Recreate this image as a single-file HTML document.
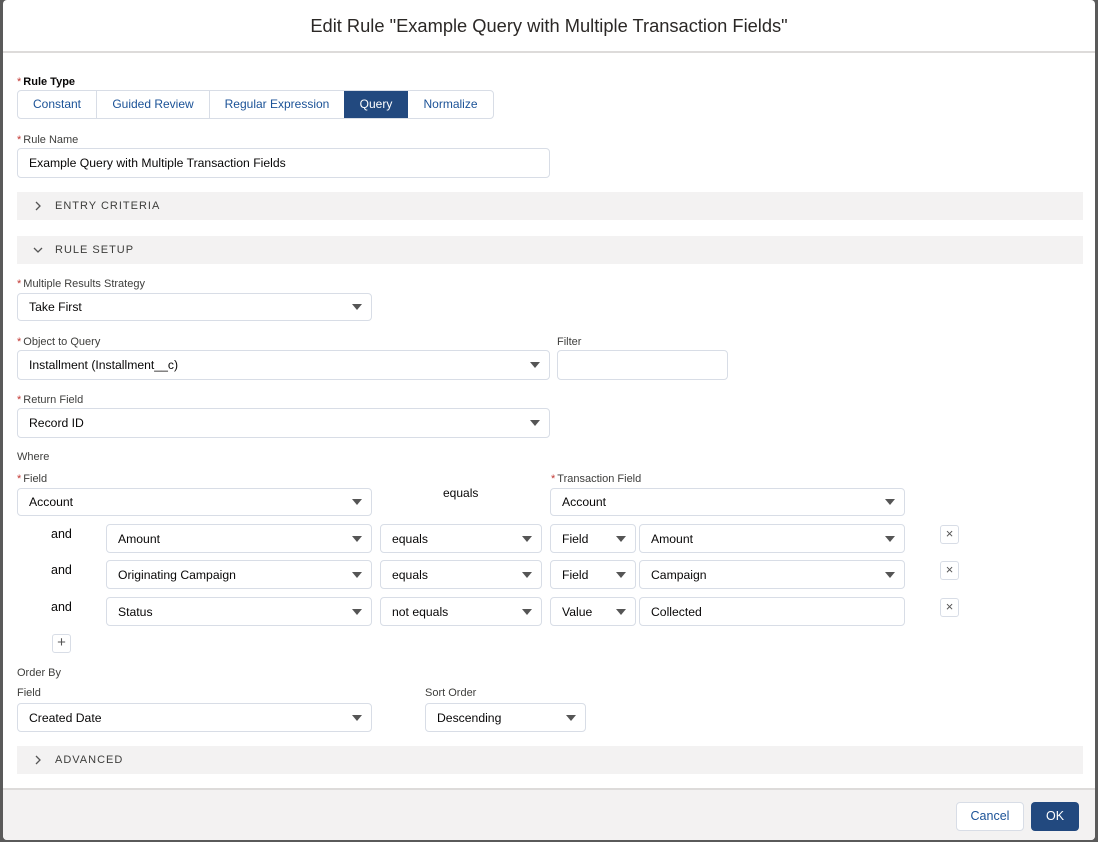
<!DOCTYPE html>
<html><head><style>
*{box-sizing:border-box;margin:0;padding:0}
body{width:1098px;height:842px;background:#5a5a5a;font-family:"Liberation Sans",sans-serif;color:#080707;position:relative;overflow:hidden;font-size:12px}
.modal{position:absolute;left:3px;top:0;width:1092px;height:840px;background:#fff;border-radius:4px;overflow:hidden}
.a{position:absolute}
.lbl{position:absolute;font-size:11px;color:#3e3e3c;margin-top:2px}
.lbl b{color:#c23934;font-weight:normal;margin-right:2px}
.box{position:absolute;border:1px solid #d8dde6;border-radius:4px;background:#fff;font-size:12.2px;padding-left:11px;display:flex;align-items:center}
.sel::after{content:"";position:absolute;right:9px;top:50%;margin-top:-3px;border-left:5px solid transparent;border-right:5px solid transparent;border-top:6px solid #555}
.bar{position:absolute;left:14px;width:1066px;height:28px;background:#f3f2f2;font-size:11px;letter-spacing:1px;color:#3e3e3c;display:flex;align-items:center;padding-left:38px}
.bar svg{position:absolute;left:16px;top:9px}
.and{position:absolute;left:48px;font-size:12.5px}
.x{position:absolute;left:937px;width:19px;height:19px;border:1px solid #d8dde6;border-radius:3px;font-size:13px;color:#555;text-align:center;line-height:16px}
</style></head><body>
<div class="modal">
<div class="a" style="left:0;top:0;width:1092px;height:53px;border-bottom:2px solid #dddbda;text-align:center;font-size:18.3px;line-height:52px;color:#2b2826">Edit Rule "Example Query with Multiple Transaction Fields"</div>

<div class="lbl" style="left:14px;top:74px;font-weight:bold;color:#080707"><b>*</b>Rule Type</div>
<div class="a" style="left:14px;top:90px;height:29px;display:flex;border:1px solid #d8dde6;border-radius:4px;overflow:hidden;font-size:12px;color:#1b5297">
<div style="width:79px;text-align:center;line-height:27px;border-right:1px solid #d8dde6">Constant</div>
<div style="width:113px;text-align:center;line-height:27px;border-right:1px solid #d8dde6">Guided Review</div>
<div style="width:134px;text-align:center;line-height:27px">Regular Expression</div>
<div style="width:64px;text-align:center;line-height:27px;background:#22497f;color:#fff">Query</div>
<div style="width:85px;text-align:center;line-height:27px">Normalize</div>
</div>

<div class="lbl" style="left:14px;top:132px"><b>*</b>Rule Name</div>
<div class="box" style="left:14px;top:148px;width:533px;height:30px">Example Query with Multiple Transaction Fields</div>

<div class="bar" style="top:192px"><svg width="10" height="10" viewBox="0 0 10 10"><path d="M3 1 L7 5 L3 9" fill="none" stroke="#555" stroke-width="1.3"/></svg>ENTRY CRITERIA</div>
<div class="bar" style="top:236px"><svg width="10" height="10" viewBox="0 0 10 10"><path d="M1 3 L5 7 L9 3" fill="none" stroke="#555" stroke-width="1.3"/></svg>RULE SETUP</div>

<div class="lbl" style="left:14px;top:276px"><b>*</b>Multiple Results Strategy</div>
<div class="box sel" style="left:14px;top:293px;width:355px;height:28px">Take First</div>

<div class="lbl" style="left:14px;top:334px"><b>*</b>Object to Query</div>
<div class="box sel" style="left:14px;top:350px;width:533px;height:30px">Installment (Installment__c)</div>
<div class="lbl" style="left:554px;top:334px">Filter</div>
<div class="box" style="left:554px;top:350px;width:171px;height:30px"></div>

<div class="lbl" style="left:14px;top:392px"><b>*</b>Return Field</div>
<div class="box sel" style="left:14px;top:408px;width:533px;height:30px">Record ID</div>

<div class="lbl" style="left:14px;top:449px">Where</div>
<div class="lbl" style="left:14px;top:471px"><b>*</b>Field</div>
<div class="box sel" style="left:14px;top:488px;width:355px;height:28px">Account</div>
<div class="a" style="left:440px;top:486px;font-size:12px">equals</div>
<div class="lbl" style="left:548px;top:471px"><b>*</b>Transaction Field</div>
<div class="box sel" style="left:547px;top:488px;width:355px;height:28px">Account</div>

<div class="and" style="top:527px">and</div>
<div class="box sel" style="left:103px;top:524px;width:266px;height:29px">Amount</div>
<div class="box sel" style="left:377px;top:524px;width:162px;height:29px">equals</div>
<div class="box sel" style="left:547px;top:524px;width:86px;height:29px">Field</div>
<div class="box sel" style="left:636px;top:524px;width:266px;height:29px">Amount</div>
<div class="x" style="top:525px">&#215;</div>

<div class="and" style="top:563px">and</div>
<div class="box sel" style="left:103px;top:560px;width:266px;height:29px">Originating Campaign</div>
<div class="box sel" style="left:377px;top:560px;width:162px;height:29px">equals</div>
<div class="box sel" style="left:547px;top:560px;width:86px;height:29px">Field</div>
<div class="box sel" style="left:636px;top:560px;width:266px;height:29px">Campaign</div>
<div class="x" style="top:561px">&#215;</div>

<div class="and" style="top:600px">and</div>
<div class="box sel" style="left:103px;top:597px;width:266px;height:29px">Status</div>
<div class="box sel" style="left:377px;top:597px;width:162px;height:29px">not equals</div>
<div class="box sel" style="left:547px;top:597px;width:86px;height:29px">Value</div>
<div class="box" style="left:636px;top:597px;width:266px;height:29px">Collected</div>
<div class="x" style="top:598px">&#215;</div>

<div class="x" style="left:49px;top:634px;font-size:15px;line-height:16px">+</div>

<div class="lbl" style="left:14px;top:665px">Order By</div>
<div class="lbl" style="left:14px;top:685px">Field</div>
<div class="box sel" style="left:14px;top:703px;width:355px;height:29px">Created Date</div>
<div class="lbl" style="left:422px;top:685px">Sort Order</div>
<div class="box sel" style="left:422px;top:703px;width:161px;height:29px">Descending</div>

<div class="bar" style="top:746px"><svg width="10" height="10" viewBox="0 0 10 10"><path d="M3 1 L7 5 L3 9" fill="none" stroke="#555" stroke-width="1.3"/></svg>ADVANCED</div>

<div class="a" style="left:0;top:788px;width:1092px;height:52px;background:#f3f2f2;border-top:2px solid #dddbda"></div>
<div class="a" style="left:953px;top:802px;width:68px;height:29px;border:1px solid #d8dde6;border-radius:4px;background:#fff;color:#1b5297;text-align:center;line-height:27px;font-size:12.5px">Cancel</div>
<div class="a" style="left:1028px;top:802px;width:48px;height:29px;border-radius:4px;background:#22497f;color:#fff;text-align:center;line-height:29px;font-size:12.5px">OK</div>
</div>
</body></html>
